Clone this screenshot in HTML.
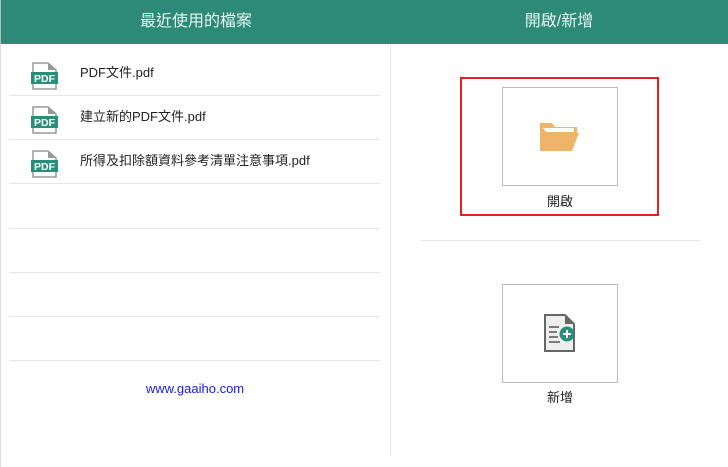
<!DOCTYPE html><html><head><meta charset="utf-8"><style>
body{margin:0;width:728px;height:467px;background:#fff;font-family:"Liberation Sans","Noto Sans CJK TC",sans-serif;position:relative;overflow:hidden}
.hd{position:absolute;top:0;height:44px;background:#2d8a78;color:#e8f4f0;font-size:16px;line-height:44px;text-align:center}
.ln{position:absolute;left:9px;width:371px;height:1px;background:#e6e6e6}
.row{position:absolute;left:0;width:390px;height:44px}
.row svg{position:absolute;left:31px;top:11px}
.row span{position:absolute;left:80px;top:0;line-height:44px;font-size:13px;color:#222}
.box{position:absolute;left:502px;width:114px;height:97px;border:1px solid #bbb}
.lb{position:absolute;left:502px;width:116px;text-align:center;font-size:13px;color:#222}
</style></head><body>
<div class="hd" style="left:0;width:390px;border-left:1px solid #bbb">最近使用的檔案</div>
<div class="hd" style="left:390px;width:338px">開啟/新增</div>
<div style="position:absolute;left:390px;top:44px;width:1px;height:412px;background:#e6e6e6"></div>
<div style="position:absolute;left:0;top:44px;width:1px;height:423px;background:#ddd"></div>
<div class="row" style="top:51px"><svg width="27" height="28" viewBox="0 0 27 28"><path d="M2 1H17L25 8V27H2Z" fill="#fff" stroke="#999" stroke-width="1.5"/><path d="M17 1V8H25" fill="#999"/><rect x="0" y="10" width="27" height="12" fill="#2a8f7a"/><text x="13.5" y="20" font-size="10.5" font-weight="bold" fill="#fff" text-anchor="middle" font-family="Liberation Sans">PDF</text></svg><span>PDF文件.pdf</span></div>
<div class="ln" style="top:95px"></div>
<div class="row" style="top:95px"><svg width="27" height="28" viewBox="0 0 27 28"><path d="M2 1H17L25 8V27H2Z" fill="#fff" stroke="#999" stroke-width="1.5"/><path d="M17 1V8H25" fill="#999"/><rect x="0" y="10" width="27" height="12" fill="#2a8f7a"/><text x="13.5" y="20" font-size="10.5" font-weight="bold" fill="#fff" text-anchor="middle" font-family="Liberation Sans">PDF</text></svg><span>建立新的PDF文件.pdf</span></div>
<div class="ln" style="top:139px"></div>
<div class="row" style="top:139px"><svg width="27" height="28" viewBox="0 0 27 28"><path d="M2 1H17L25 8V27H2Z" fill="#fff" stroke="#999" stroke-width="1.5"/><path d="M17 1V8H25" fill="#999"/><rect x="0" y="10" width="27" height="12" fill="#2a8f7a"/><text x="13.5" y="20" font-size="10.5" font-weight="bold" fill="#fff" text-anchor="middle" font-family="Liberation Sans">PDF</text></svg><span>所得及扣除額資料參考清單注意事項.pdf</span></div>
<div class="ln" style="top:183px"></div>
<div class="ln" style="top:228px"></div>
<div class="ln" style="top:272px"></div>
<div class="ln" style="top:316px"></div>
<div class="ln" style="top:360px"></div>
<div style="position:absolute;left:0;width:390px;top:381px;text-align:center;font-size:13px;color:#1a1adf">www.gaaiho.com</div>
<div style="position:absolute;left:460px;top:77px;width:195px;height:135px;border:2px solid #e52020"></div>
<div class="box" style="top:87px"><svg style="position:absolute;left:36px;top:33px" width="40" height="32" viewBox="0 0 40 32"><path d="M1 2H13L16 6H38V12H8L1 30Z" fill="#f0b36a"/><path d="M1 30L7 12H40L33 30Z" fill="#f0b36a"/><path d="M4 7H35V11H7Z" fill="#fff"/></svg></div>
<div class="lb" style="top:191px">開啟</div>
<div style="position:absolute;left:421px;top:240px;width:279px;height:1px;background:#e6e6e6"></div>
<div class="box" style="top:284px"><svg style="position:absolute;left:40px;top:29px" width="36" height="38" viewBox="0 0 36 38"><path d="M2 1H22L31 10V37H2Z" fill="#eee" stroke="#666" stroke-width="2"/><path d="M22 1V10H31Z" fill="#666"/><path d="M6 13H16M6 18H14M6 23H15M6 28H17" stroke="#555" stroke-width="1.6"/><circle cx="24" cy="20" r="7.5" fill="#2a8f7a"/><path d="M24 16V24M20 20H28" stroke="#fff" stroke-width="2"/></svg></div>
<div class="lb" style="top:387px">新增</div>
</body></html>
